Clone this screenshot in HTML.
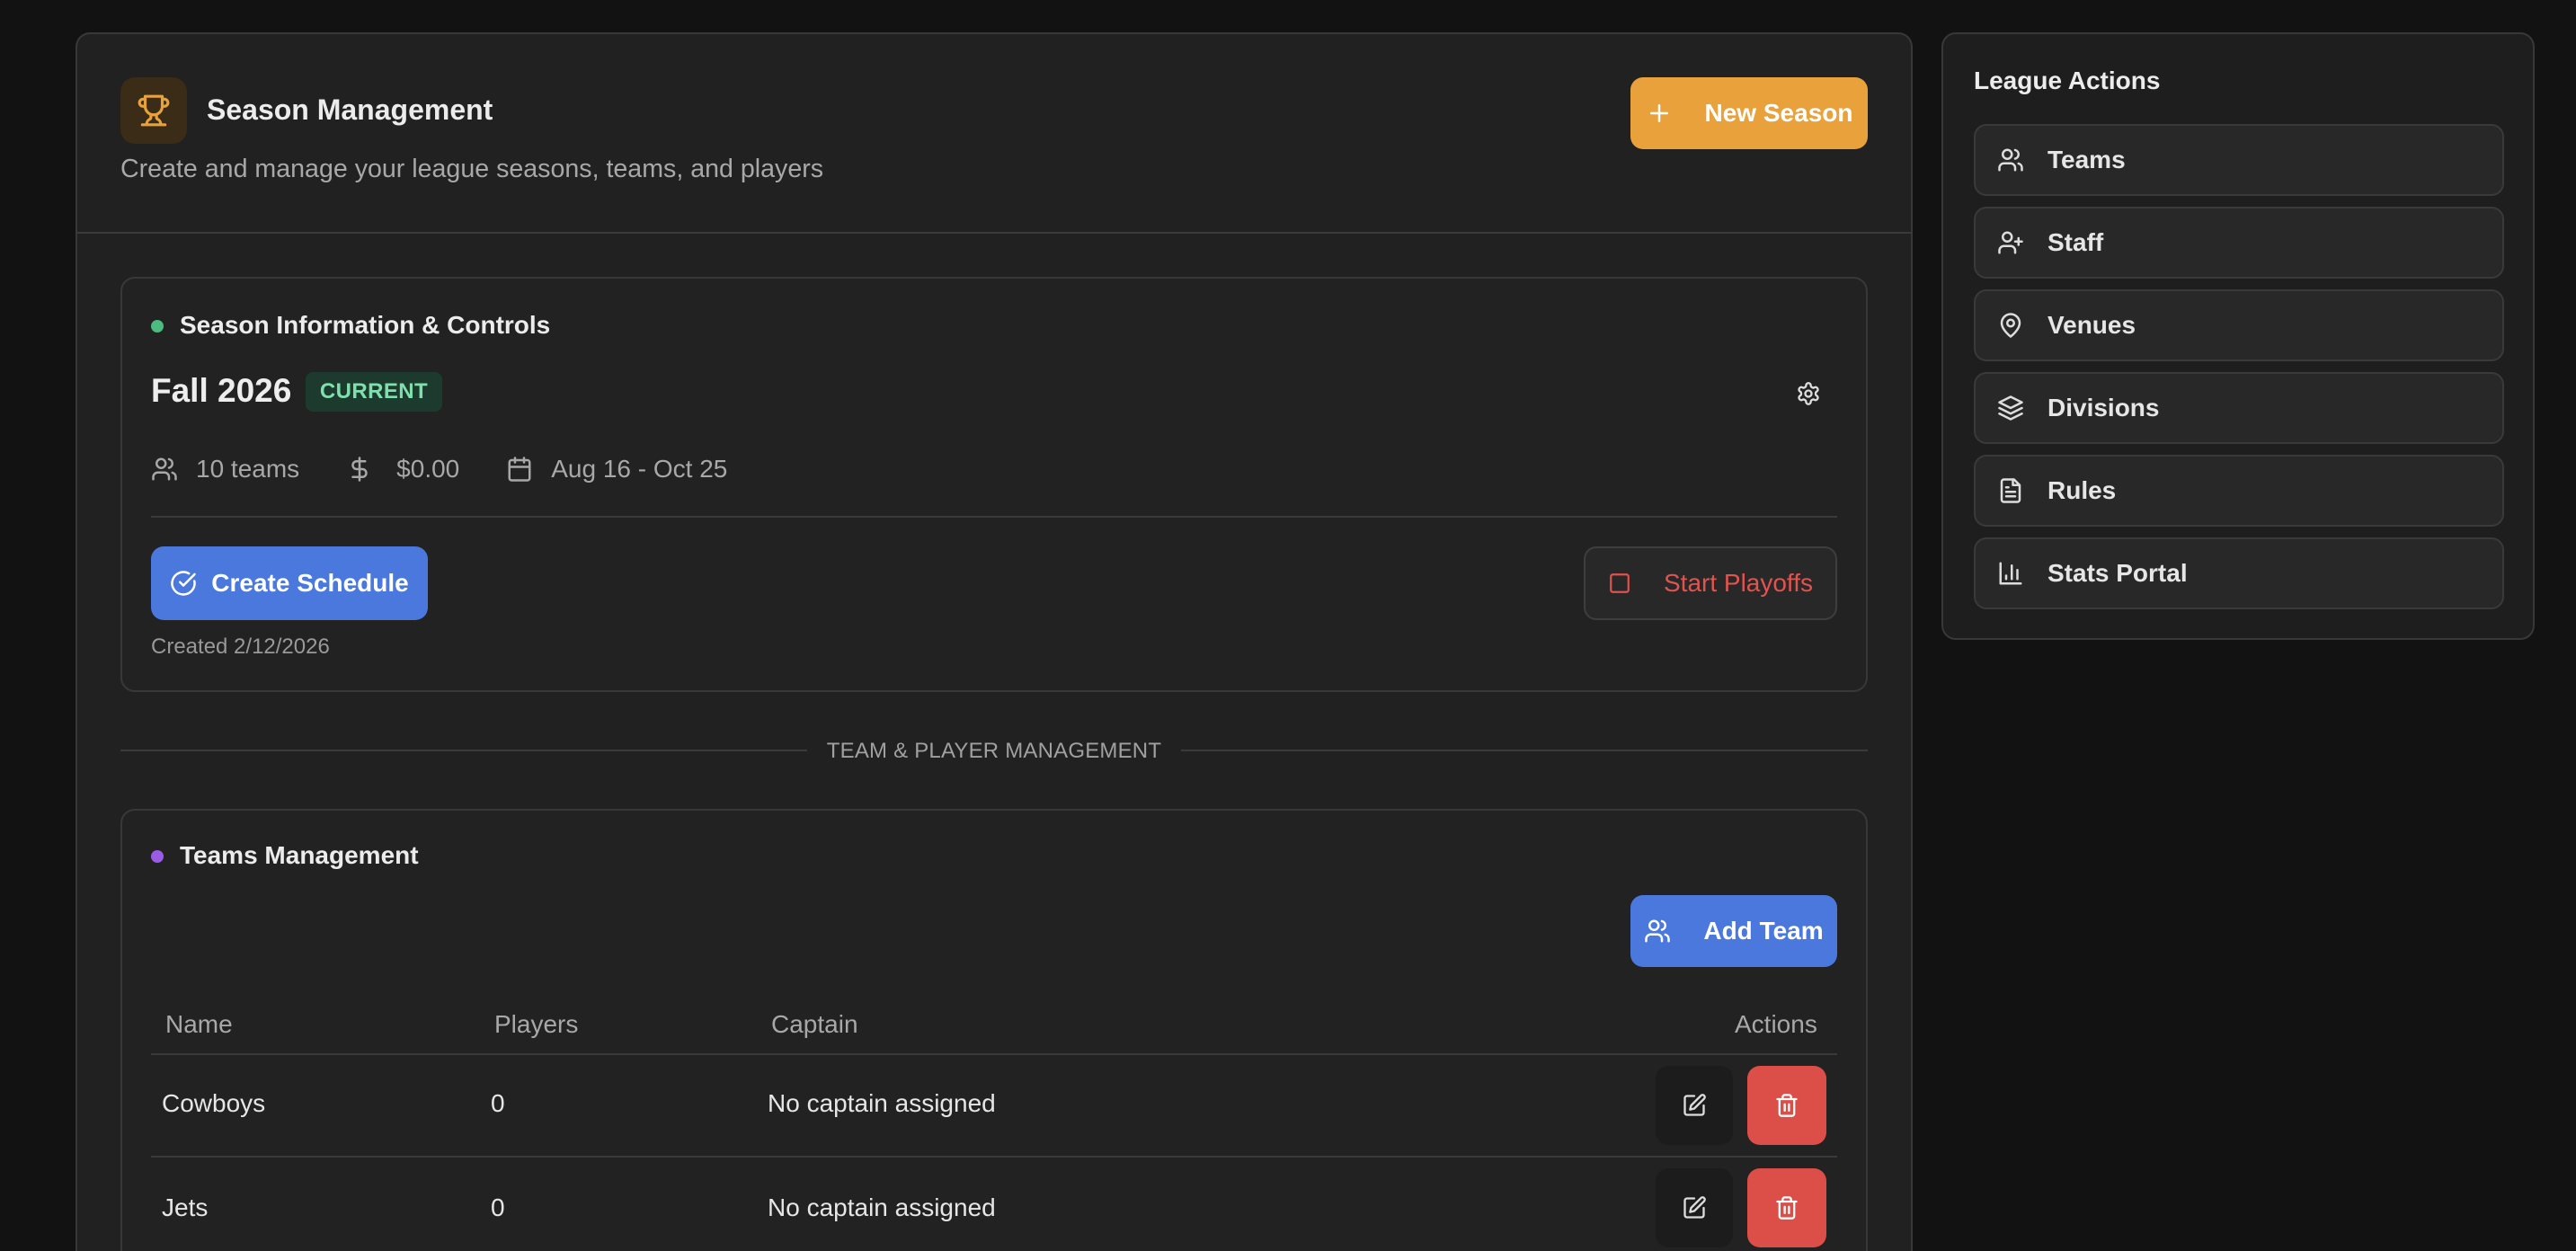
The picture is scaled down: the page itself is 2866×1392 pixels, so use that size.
<!DOCTYPE html>
<html><head><meta charset="utf-8"><style>
*{box-sizing:border-box;margin:0;padding:0}
html{background:#121212;overflow:hidden;height:1392px;width:2866px}
body{background:#121212;overflow:hidden;zoom:2;width:1433px;height:696px;position:relative;font-family:"Liberation Sans",sans-serif;color:#e8e8e8}
.abs{position:absolute}
.card{position:absolute;background:#212121;border:1px solid #383838;border-radius:8px}
svg{display:block}
.ic{fill:none;stroke:currentColor;stroke-width:2;stroke-linecap:round;stroke-linejoin:round}
.side{position:absolute;left:1098px;width:295px;height:40px;background:#282828;border:1px solid #3a3a3a;border-radius:7px;display:flex;align-items:center;font-size:14px;font-weight:bold;color:#e6e6e6}
.side svg{margin-left:12px;margin-right:13px;color:#ddd}
.btn{position:absolute;border-radius:7px;display:flex;align-items:center;justify-content:center;font-size:14px;font-weight:bold}
</style></head><body>
<div class="card" style="left:42px;top:18px;width:1022px;height:678px;border-radius:8px 8px 0 0;border-bottom:none"></div>
<div class="abs" style="left:42px;top:129px;width:1022px;height:1px;background:#3a3a3a"></div>
<div class="abs" style="left:67px;top:43px;width:37px;height:37px;border-radius:8px;background:#3a2c16;color:#e9a23b;display:flex;align-items:center;justify-content:center">
<svg class="ic" width="19" height="19" viewBox="0 0 24 24"><path d="M6 9H4.5a2.5 2.5 0 0 1 0-5H6M18 9h1.5a2.5 2.5 0 0 0 0-5H18M4 22h16M10 14.66V17c0 .55-.47.98-.97 1.21C7.85 18.75 7 20.24 7 22M14 14.66V17c0 .55.47.98.97 1.21C16.15 18.75 17 20.24 17 22M18 2H6v7a6 6 0 0 0 12 0V2z"/></svg></div>
<div class="abs" style="left:115px;top:52px;font-size:16px;font-weight:bold;color:#ececec">Season Management</div>
<div class="abs" style="left:67px;top:86px;font-size:14.3px;color:#a8a8a8">Create and manage your league seasons, teams, and players</div>
<div class="btn" style="left:907px;top:43px;width:132px;height:40px;background:#e9a23b;color:#fff">
<svg class="ic" width="15" height="15" viewBox="0 0 24 24" style="margin-right:18px"><path d="M12 5v14M5 12h14"/></svg>New Season</div>

<div class="card" style="left:67px;top:154px;width:972px;height:231px;background:#222"></div>
<div class="abs" style="left:84px;top:178px;width:7px;height:7px;border-radius:50%;background:#4cbb7f"></div>
<div class="abs" style="left:100px;top:173px;font-size:14px;font-weight:bold;color:#ececec">Season Information &amp; Controls</div>
<div class="abs" style="left:84px;top:207px;font-size:18.5px;font-weight:bold;color:#eee">Fall 2026</div>
<div class="abs" style="left:170px;top:207px;width:76px;height:22px;border-radius:4px;background:#1c3a2d;color:#7fe0ae;font-size:12px;font-weight:bold;display:flex;align-items:center;justify-content:center;letter-spacing:.2px">CURRENT</div>
<svg class="ic abs" style="left:999px;top:212px;color:#ddd" width="14" height="14" viewBox="0 0 24 24"><path d="M12.22 2h-.44a2 2 0 0 0-2 2v.18a2 2 0 0 1-1 1.73l-.43.25a2 2 0 0 1-2 0l-.15-.08a2 2 0 0 0-2.73.73l-.22.38a2 2 0 0 0 .73 2.730l.15.1a2 2 0 0 1 1 1.72v.51a2 2 0 0 1-1 1.74l-.15.09a2 2 0 0 0-.73 2.73l.22.38a2 2 0 0 0 2.73.73l.15-.08a2 2 0 0 1 2 0l.43.25a2 2 0 0 1 1 1.73V20a2 2 0 0 0 2 2h.44a2 2 0 0 0 2-2v-.18a2 2 0 0 1 1-1.73l.43-.25a2 2 0 0 1 2 0l.15.08a2 2 0 0 0 2.73-.73l.22-.39a2 2 0 0 0-.73-2.73l-.15-.08a2 2 0 0 1-1-1.74v-.5a2 2 0 0 1 1-1.74l.15-.09a2 2 0 0 0 .73-2.73l-.22-.38a2 2 0 0 0-2.73-.73l-.15.08a2 2 0 0 1-2 0l-.43-.25a2 2 0 0 1-1-1.73V4a2 2 0 0 0-2-2z"/><circle cx="12" cy="12" r="3"/></svg>
<div class="abs" style="left:84px;top:253px;display:flex;align-items:center;font-size:14px;color:#a8a8a8">
<svg class="ic" width="15" height="15" viewBox="0 0 24 24"><path d="M16 21v-2a4 4 0 0 0-4-4H6a4 4 0 0 0-4 4v2"/><circle cx="9" cy="7" r="4"/><path d="M22 21v-2a4 4 0 0 0-3-3.87M16 3.13a4 4 0 0 1 0 7.75"/></svg>
<span style="margin-left:10px">10 teams</span>
<svg class="ic" width="15" height="15" viewBox="0 0 24 24" style="margin-left:26px"><path d="M12 2v20M17 5H9.5a3.5 3.5 0 0 0 0 7h5a3.5 3.5 0 0 1 0 7H6"/></svg>
<span style="margin-left:13px">$0.00</span>
<svg class="ic" width="15" height="15" viewBox="0 0 24 24" style="margin-left:26px"><rect x="3" y="4" width="18" height="18" rx="2"/><path d="M16 2v4M8 2v4M3 10h18"/></svg>
<span style="margin-left:10px">Aug 16 - Oct 25</span></div>
<div class="abs" style="left:84px;top:287px;width:938px;height:1px;background:#3a3a3a"></div>
<div class="btn" style="left:84px;top:304px;width:154px;height:41px;background:#4a78dc;color:#fff">
<svg class="ic" width="15" height="15" viewBox="0 0 24 24" style="margin-right:8px"><path d="M21.8 10A10 10 0 1 1 17 3.34"/><path d="m9 11 3 3L22 4"/></svg>Create Schedule</div>
<div class="btn" style="left:881px;top:304px;width:141px;height:41px;background:#282828;border:1px solid #3e3e3e;color:#e0544f;font-weight:normal">
<svg class="ic" width="13" height="13" viewBox="0 0 24 24" style="margin-right:18px;color:#e0544f"><rect x="3" y="3" width="18" height="18" rx="2"/></svg>Start Playoffs</div>
<div class="abs" style="left:84px;top:353px;font-size:12px;color:#999">Created 2/12/2026</div>

<div class="abs" style="left:67px;top:417px;width:382px;height:1px;background:#3a3a3a"></div>
<div class="abs" style="left:657px;top:417px;width:382px;height:1px;background:#3a3a3a"></div>
<div class="abs" style="left:449px;top:411px;width:208px;text-align:center;font-size:12px;color:#a0a0a0;letter-spacing:.1px">TEAM &amp; PLAYER MANAGEMENT</div>

<div class="card" style="left:67px;top:450px;width:972px;height:300px;background:#222"></div>
<div class="abs" style="left:84px;top:473px;width:7px;height:7px;border-radius:50%;background:#9a5ce6"></div>
<div class="abs" style="left:100px;top:468px;font-size:14px;font-weight:bold;color:#ececec">Teams Management</div>
<div class="btn" style="left:907px;top:498px;width:115px;height:40px;background:#4a78dc;color:#fff">
<svg class="ic" width="15" height="15" viewBox="0 0 24 24" style="margin-right:18px"><path d="M16 21v-2a4 4 0 0 0-4-4H6a4 4 0 0 0-4 4v2"/><circle cx="9" cy="7" r="4"/><path d="M22 21v-2a4 4 0 0 0-3-3.87M16 3.13a4 4 0 0 1 0 7.75"/></svg>Add Team</div>
<div class="abs" style="left:92px;top:562px;font-size:14px;color:#a8a8a8">Name</div>
<div class="abs" style="left:275px;top:562px;font-size:14px;color:#a8a8a8">Players</div>
<div class="abs" style="left:429px;top:562px;font-size:14px;color:#a8a8a8">Captain</div>
<div class="abs" style="left:965px;top:562px;font-size:14px;color:#a8a8a8">Actions</div>
<div class="abs" style="left:84px;top:586px;width:938px;height:1px;background:#3a3a3a"></div>
<div class="abs" style="left:90px;top:606px;font-size:14px;color:#e6e6e6">Cowboys</div>
<div class="abs" style="left:273px;top:606px;font-size:14px;color:#e6e6e6">0</div>
<div class="abs" style="left:427px;top:606px;font-size:14px;color:#e6e6e6">No captain assigned</div>
<div class="abs" style="left:84px;top:643px;width:938px;height:1px;background:#3a3a3a"></div>
<div class="abs" style="left:90px;top:664px;font-size:14px;color:#e6e6e6">Jets</div>
<div class="abs" style="left:273px;top:664px;font-size:14px;color:#e6e6e6">0</div>
<div class="abs" style="left:427px;top:664px;font-size:14px;color:#e6e6e6">No captain assigned</div>
<div class="btn" style="left:921px;top:593px;width:43px;height:44px;background:#1c1c1c"><svg class="ic" width="14" height="14" viewBox="0 0 24 24" style="color:#ddd"><path d="M12 3H5a2 2 0 0 0-2 2v14a2 2 0 0 0 2 2h14a2 2 0 0 0 2-2v-7"/><path d="M18.4 2.6a2.1 2.1 0 0 1 3 3L12 15l-4 1 1-4z"/></svg></div>
<div class="btn" style="left:972px;top:593px;width:44px;height:44px;background:#dc4f49"><svg class="ic" width="14" height="14" viewBox="0 0 24 24" style="color:#fff"><path d="M3 6h18M19 6v14a2 2 0 0 1-2 2H7a2 2 0 0 1-2-2V6M8 6V4a2 2 0 0 1 2-2h4a2 2 0 0 1 2 2v2M10 11v6M14 11v6"/></svg></div>
<div class="btn" style="left:921px;top:650px;width:43px;height:44px;background:#1c1c1c"><svg class="ic" width="14" height="14" viewBox="0 0 24 24" style="color:#ddd"><path d="M12 3H5a2 2 0 0 0-2 2v14a2 2 0 0 0 2 2h14a2 2 0 0 0 2-2v-7"/><path d="M18.4 2.6a2.1 2.1 0 0 1 3 3L12 15l-4 1 1-4z"/></svg></div>
<div class="btn" style="left:972px;top:650px;width:44px;height:44px;background:#dc4f49"><svg class="ic" width="14" height="14" viewBox="0 0 24 24" style="color:#fff"><path d="M3 6h18M19 6v14a2 2 0 0 1-2 2H7a2 2 0 0 1-2-2V6M8 6V4a2 2 0 0 1 2-2h4a2 2 0 0 1 2 2v2M10 11v6M14 11v6"/></svg></div>

<div class="card" style="left:1080px;top:18px;width:330px;height:338px;background:#1e1e1e"></div>
<div class="abs" style="left:1098px;top:37px;font-size:14px;font-weight:bold;color:#ececec">League Actions</div>
<div class="side" style="top:69px"><svg class="ic" width="15" height="15" viewBox="0 0 24 24"><path d="M16 21v-2a4 4 0 0 0-4-4H6a4 4 0 0 0-4 4v2"/><circle cx="9" cy="7" r="4"/><path d="M22 21v-2a4 4 0 0 0-3-3.87M16 3.13a4 4 0 0 1 0 7.75"/></svg>Teams</div>
<div class="side" style="top:115px"><svg class="ic" width="15" height="15" viewBox="0 0 24 24"><path d="M16 21v-2a4 4 0 0 0-4-4H6a4 4 0 0 0-4 4v2"/><circle cx="9" cy="7" r="4"/><path d="M19 8v6M22 11h-6"/></svg>Staff</div>
<div class="side" style="top:161px"><svg class="ic" width="15" height="15" viewBox="0 0 24 24"><path d="M20 10c0 6-8 12-8 12s-8-6-8-12a8 8 0 0 1 16 0z"/><circle cx="12" cy="10" r="3"/></svg>Venues</div>
<div class="side" style="top:207px"><svg class="ic" width="15" height="15" viewBox="0 0 24 24"><path d="m12 2 10 5-10 5L2 7z"/><path d="m2 12 10 5 10-5M2 17l10 5 10-5"/></svg>Divisions</div>
<div class="side" style="top:253px"><svg class="ic" width="15" height="15" viewBox="0 0 24 24"><path d="M15 2H6a2 2 0 0 0-2 2v16a2 2 0 0 0 2 2h12a2 2 0 0 0 2-2V7z"/><path d="M14 2v5h5M16 13H8M16 17H8M10 9H8"/></svg>Rules</div>
<div class="side" style="top:299px"><svg class="ic" width="15" height="15" viewBox="0 0 24 24"><path d="M3 3v18h18M18 17V9M13 17V5M8 17v-3"/></svg>Stats Portal</div>
</body></html>
